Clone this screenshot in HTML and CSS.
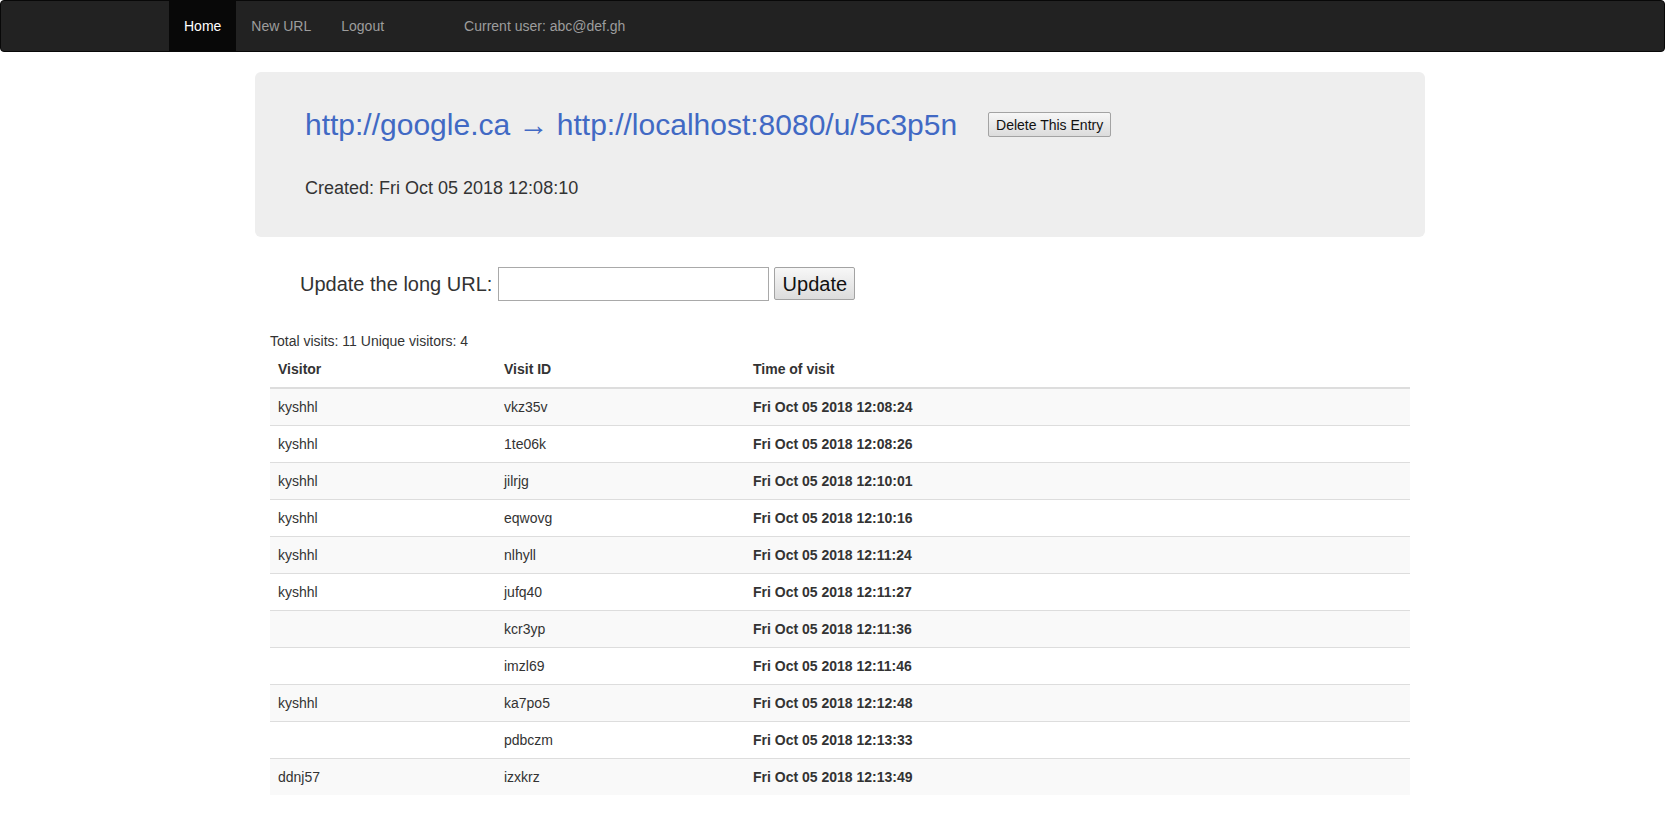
FILE: index.html
```html
<!DOCTYPE html>
<html>
<head>
<meta charset="utf-8">
<title>URL details</title>
<link rel="stylesheet" href="styles.css">
</head>
<body>
<nav class="navbar">
  <ul class="nav">
    <li class="active"><a href="#">Home</a></li>
    <li><a href="#">New URL</a></li>
    <li><a href="#">Logout</a></li>
  </ul>
  <p class="navbar-text">Current user: abc@def.gh</p>
</nav>
<div class="page">
  <div class="jumbotron">
    <div class="title-row">
      <a class="title" href="#">http://google.ca → http://localhost:8080/u/5c3p5n</a>
      <button class="btn btn-delete" type="button">Delete This Entry</button>
    </div>
    <p class="created">Created: Fri Oct 05 2018 12:08:10</p>
  </div>
  <form class="update-form">
    <label class="update-label" for="longurl">Update the long URL:</label>
    <input class="update-input" id="longurl" type="text">
    <button class="btn btn-update" type="button">Update</button>
  </form>
  <p class="totals">Total visits: 11 Unique visitors: 4</p>
  <table class="visits">
    <thead>
      <tr><th class="col-visitor">Visitor</th><th class="col-id">Visit ID</th><th>Time of visit</th></tr>
    </thead>
    <tbody>
      <tr><td>kyshhl</td><td>vkz35v</td><td class="time">Fri Oct 05 2018 12:08:24</td></tr>
      <tr><td>kyshhl</td><td>1te06k</td><td class="time">Fri Oct 05 2018 12:08:26</td></tr>
      <tr><td>kyshhl</td><td>jilrjg</td><td class="time">Fri Oct 05 2018 12:10:01</td></tr>
      <tr><td>kyshhl</td><td>eqwovg</td><td class="time">Fri Oct 05 2018 12:10:16</td></tr>
      <tr><td>kyshhl</td><td>nlhyll</td><td class="time">Fri Oct 05 2018 12:11:24</td></tr>
      <tr><td>kyshhl</td><td>jufq40</td><td class="time">Fri Oct 05 2018 12:11:27</td></tr>
      <tr><td></td><td>kcr3yp</td><td class="time">Fri Oct 05 2018 12:11:36</td></tr>
      <tr><td></td><td>imzl69</td><td class="time">Fri Oct 05 2018 12:11:46</td></tr>
      <tr><td>kyshhl</td><td>ka7po5</td><td class="time">Fri Oct 05 2018 12:12:48</td></tr>
      <tr><td></td><td>pdbczm</td><td class="time">Fri Oct 05 2018 12:13:33</td></tr>
      <tr><td>ddnj57</td><td>izxkrz</td><td class="time">Fri Oct 05 2018 12:13:49</td></tr>
    </tbody>
  </table>
</div>
</body>
</html>
```

FILE: styles.css
```css
* { box-sizing: border-box; }

html, body {
  margin: 0;
  padding: 0;
  background: #fff;
}

body {
  font-family: "Liberation Sans", Arial, sans-serif;
  font-size: 14px;
  line-height: 20px;
  color: #333;
}

/* Navbar */
.navbar {
  display: flex;
  align-items: stretch;
  height: 52px;
  background: #222;
  border: 1px solid #080808;
  border-radius: 4px;
  margin: 0 0 20px;
  padding-left: 168px;
}

.nav {
  display: flex;
  list-style: none;
  margin: 0;
  padding: 0;
}

.nav a {
  display: block;
  padding: 15px;
  line-height: 20px;
  font-size: 14px;
  color: #9d9d9d;
  text-decoration: none;
}

.nav .active a {
  background: #080808;
  color: #fff;
}

.navbar-text {
  margin: 15px 0 15px 65px;
  line-height: 20px;
  color: #9d9d9d;
}

/* Page */
.page {
  width: 1170px;
  margin-left: calc(50% - 577.5px);
}

.jumbotron {
  background: #eee;
  border-radius: 6px;
  padding: 36px 48px 36px 50px;
  margin-bottom: 29px;
}

.title-row {
  display: flex;
  align-items: center;
  height: 33px;
}

.title {
  font-size: 30px;
  line-height: 33px;
  color: #4169c4;
  text-decoration: none;
}

.btn {
  font-family: "Liberation Sans", Arial, sans-serif;
  color: #111;
  background: linear-gradient(#f7f7f7, #dcdcdc);
  border: 1px solid #a3a3a3;
  border-radius: 2px;
  padding: 0;
  cursor: pointer;
}

.btn-delete {
  margin-left: 31px;
  width: 123px;
  height: 25px;
  font-size: 14px;
  line-height: 16px;
}

.created {
  margin: 34px 0 0;
  font-size: 18px;
  line-height: 26px;
  color: #333;
}

/* Update form */
.update-form {
  display: flex;
  align-items: center;
  height: 35px;
  padding-left: 45px;
  font-size: 20px;
}

.update-label {
  margin-right: 6px;
  line-height: 24px;
}

.update-input {
  width: 271px;
  height: 34px;
  border: 1px solid #a9a9a9;
  border-radius: 0;
  padding: 2px 4px;
  font-size: 20px;
  background: #fff;
}

.btn-update {
  margin-left: 5px;
  width: 81px;
  height: 33px;
  font-size: 20px;
  line-height: 24px;
}

.totals {
  margin: 30px 0 0;
  padding-left: 15px;
  line-height: 20px;
}

/* Table */
.visits {
  margin: 0 15px;
  width: 1140px;
  border-collapse: collapse;
  border-spacing: 0;
}

.visits th,
.visits td {
  padding: 8px;
  line-height: 20px;
  text-align: left;
  vertical-align: top;
}

.visits th {
  font-weight: bold;
  border-bottom: 2px solid #ddd;
}

.visits .col-visitor { width: 226px; }
.visits .col-id { width: 249px; }

.visits td {
  border-top: 1px solid #ddd;
}

.visits tbody tr:nth-child(odd) {
  background: #f9f9f9;
}

.visits .time {
  font-weight: bold;
}
```
